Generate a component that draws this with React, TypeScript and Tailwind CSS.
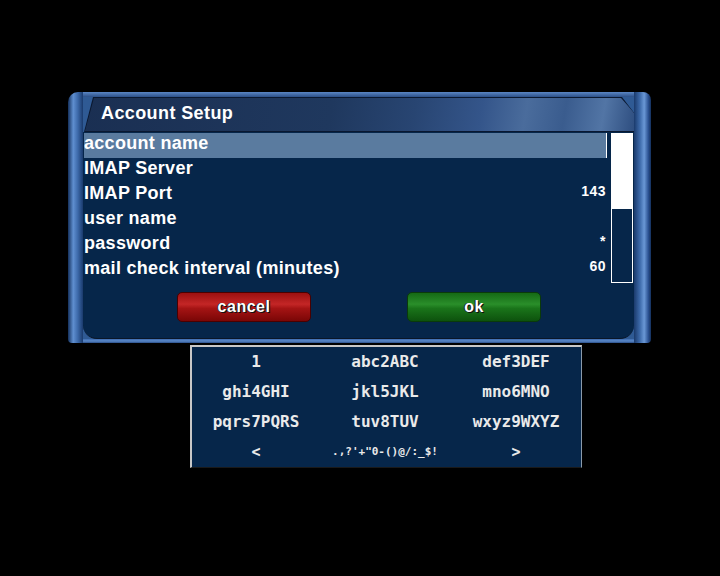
const rows = [
  { label: 'account name', value: '' },
  { label: 'IMAP Server', value: '' },
  { label: 'IMAP Port', value: '143' },
  { label: 'user name', value: '' },
  { label: 'password', value: '*' },
  { label: 'mail check interval (minutes)', value: '60' },
]

const keys = [
  ['1', 'abc2ABC', 'def3DEF'],
  ['ghi4GHI', 'jkl5JKL', 'mno6MNO'],
  ['pqrs7PQRS', 'tuv8TUV', 'wxyz9WXYZ'],
]

const Tube = ({ side }: { side: 'left' | 'right' }) => (
  <div
    className={
      side === 'left'
        ? 'w-[15px] rounded-tl-[10px] rounded-bl-[4px] bg-[linear-gradient(to_right,#14305c,#5f8fd0_35%,#3d6aaa_65%,#1a3a6c)]'
        : 'w-[17px] rounded-tr-[8px] rounded-br-[4px] bg-[linear-gradient(to_right,#1a3a6c,#3d6aaa_35%,#6a98d6_60%,#2a5090_85%,#14305c)]'
    }
  />
)

const GlossButton = ({ label, tone }: { label: string; tone: 'red' | 'green' }) => (
  <div
    className={
      tone === 'red'
        ? 'flex h-[30px] w-[134px] items-center justify-center rounded-[5px] border border-[#4a0000] bg-[linear-gradient(to_bottom,#9c1010,#c42626_40%,#a51414_55%,#7a0606)]'
        : 'flex h-[30px] w-[134px] items-center justify-center rounded-[5px] border border-[#0a3a0a] bg-[linear-gradient(to_bottom,#156a15,#2a8e2a_40%,#1a741a_55%,#0d520d)]'
    }
  >
    <span className="text-[16px] font-bold tracking-[0.5px] text-white [text-shadow:1px_1px_0_#111,-1px_0_0_#222]">
      {label}
    </span>
  </div>
)

export default function App() {
  return (
    <div className="h-[576px] w-[720px] overflow-hidden bg-black pt-[92px] font-['Liberation_Sans',Arial,sans-serif]">
      <div className="ml-[68px] flex h-[251px] w-[583px]">
        <Tube side="left" />
        <div className="flex flex-1 flex-col bg-[#2f5a94]">
          <div className="h-[5px] bg-[linear-gradient(to_bottom,#5a86c4,#2c5088)]" />
          <div className="flex h-[35px] bg-[#0a1830] [clip-path:polygon(10px_0,calc(100%-12px)_0,100%_45%,100%_100%,1px_100%)]">
            <div className="mb-[1px] mt-[1px] flex flex-1 items-center bg-[linear-gradient(100deg,#1a2f52_0%,#1f385e_45%,#284572_60%,#34558a_72%,#4a6c9c_80%,#3a5c8e_87%,#5275a5_94%,#2e4e80_100%)] pb-[2px] pl-[18px] [clip-path:polygon(11px_0,calc(100%-13px)_0,100%_45%,100%_100%,2px_100%)]">
              <span className="text-[18px] font-bold tracking-[0.4px] text-white">Account Setup</span>
            </div>
          </div>
          <div className="flex flex-1 flex-col rounded-b-[14px] border-b border-[#0a1628] bg-[#06264a] pt-[1px]">
            <div className="flex">
              <div className="ml-[1px] flex w-[523px] flex-col">
                {rows.map((row, i) => (
                  <div
                    key={row.label}
                    className={
                      'flex h-[25px] items-center justify-between ' +
                      (i === 0 ? 'border-r border-white bg-[#5a7b9f]' : '')
                    }
                  >
                    <span className="mb-[4px] text-[18px] font-bold tracking-[0.3px] text-white">{row.label}</span>
                    <span className="mb-[8px] pr-[1px] text-[14px] font-bold tracking-[0.5px] text-white">{row.value}</span>
                  </div>
                ))}
              </div>
              <div className="ml-[4px] flex h-[150px] w-[22px] flex-col border border-white">
                <div className="h-[75px] bg-white" />
              </div>
            </div>
            <div className="ml-[94px] mt-[9px] flex gap-[96px]">
              <GlossButton label="cancel" tone="red" />
              <GlossButton label="ok" tone="green" />
            </div>
          </div>
          <div className="h-[4px] bg-[linear-gradient(to_bottom,#3e6cb0,#5a88c8,#2a4e88)]" />
        </div>
        <Tube side="right" />
      </div>

      <div className="ml-[190px] mt-[2px] h-[123px] w-[392px] border-b border-l-2 border-r border-t-2 border-b-[#1a1a1a] border-l-[#c8c8c8] border-r-[#8a9aaa] border-t-[#c8c8c8] bg-[#06264a] pl-[5px] font-['DejaVu_Sans_Mono',monospace] text-[#eaeaea]">
        {keys.map((row) => (
          <div key={row[0]} className="grid h-[30px] grid-cols-[118px_140px_122px] items-center">
            {row.map((k) => (
              <span key={k} className="justify-self-center text-[16px] font-bold">
                {k}
              </span>
            ))}
          </div>
        ))}
        <div className="grid h-[30px] grid-cols-[118px_140px_122px] items-center">
          <span className="justify-self-center text-[15px] font-bold">&lt;</span>
          <span className="justify-self-center text-[11px] font-bold">.,?'+"0-()@/:_$!</span>
          <span className="justify-self-center text-[15px] font-bold">&gt;</span>
        </div>
      </div>
    </div>
  )
}
